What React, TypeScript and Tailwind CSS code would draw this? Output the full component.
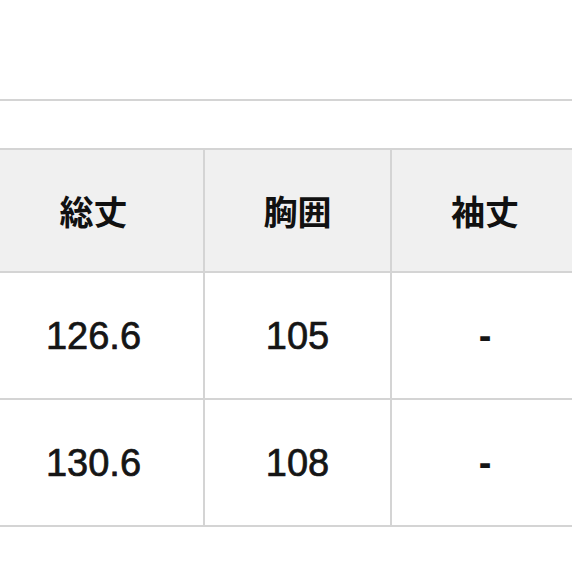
import React from "react"

const headers = ["総丈", "胸囲", "袖丈"]

const rows = [
  ["126.6", "105", "-"],
  ["130.6", "108", "-"],
]

export default function App() {
  return (
    <div className="w-[572px] h-[572px] overflow-hidden bg-white">
      <div className="h-[99px]" />
      <div className="border-t-2 border-[#d4d4d4]" />
      <div className="h-[47px]" />
      <table
        className="-ml-[18px] w-[596px] table-fixed border-collapse"
        style={{ fontFamily: '"Liberation Sans", "Noto Sans CJK JP", sans-serif' }}
      >
        <colgroup>
          <col className="w-[221px]" />
          <col className="w-[187px]" />
          <col className="w-[188px]" />
        </colgroup>
        <thead>
          <tr className="h-[123px] bg-[#f0f0f0]">
            {headers.map((h) => (
              <th
                key={h}
                className="border-2 border-[#d4d4d4] text-center align-middle text-[34px] font-bold text-[#111111] leading-none"
                style={{ fontFamily: '"Noto Sans CJK JP", sans-serif' }}
              >
                {h}
              </th>
            ))}
          </tr>
        </thead>
        <tbody>
          {rows.map((row, i) => (
            <tr key={i} className="h-[127px]">
              {row.map((cell, j) => (
                <td
                  key={j}
                  className={`border-2 border-[#d4d4d4] text-center align-middle leading-none text-[#151515] text-[38px] ${
                    cell === "-" ? "font-bold" : "[-webkit-text-stroke:0.7px_#151515]"
                  }`}
                >
                  {cell}
                </td>
              ))}
            </tr>
          ))}
        </tbody>
      </table>
    </div>
  )
}
